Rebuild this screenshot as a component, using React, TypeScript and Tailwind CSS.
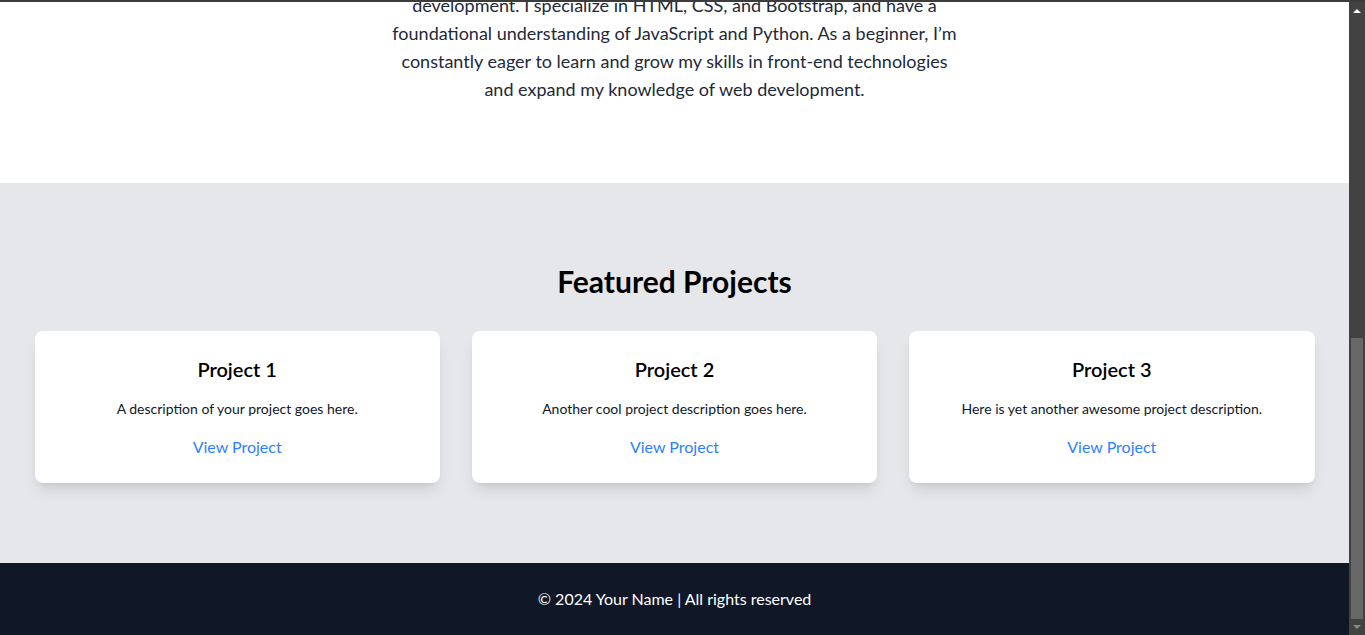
import React from 'react';

// Project cards shown in the featured section
interface Project {
  title: string;
  description: string;
}

const projects: Project[] = [
  { title: 'Project 1', description: 'A description of your project goes here.' },
  { title: 'Project 2', description: 'Another cool project description goes here.' },
  { title: 'Project 3', description: 'Here is yet another awesome project description.' },
];

// The about paragraph, already scrolled past its first lines
const aboutLines: string[] = [
  'development. I specialize in HTML, CSS, and Bootstrap, and have a',
  'foundational understanding of JavaScript and Python. As a beginner, I\u2019m',
  'constantly eager to learn and grow my skills in front-end technologies',
  'and expand my knowledge of web development.',
];

const Scrollbar: React.FC = () => (
  <div className="w-4 shrink-0 bg-[#424242] flex flex-col items-center">
    <svg width="16" height="16" viewBox="0 0 16 16" className="shrink-0">
      <path d="M4 11 L8 7 L12 11 Z" fill="#ffffff" />
    </svg>
    <div className="flex-1 w-full flex flex-col pt-[320px] pb-0 px-[2px]">
      <div className="flex-1 bg-[#686868]" />
    </div>
    <svg width="16" height="16" viewBox="0 0 16 16" className="shrink-0">
      <path d="M4 6 L12 6 L8 10 Z" fill="#8a8a8a" />
    </svg>
  </div>
);

const App: React.FC = () => {
  return (
    <div
      className="h-screen flex flex-col overflow-hidden border-t-2 border-[#3c3c3c]"
      style={{ fontFamily: 'Lato, "Noto Sans", sans-serif' }}
    >
      <div className="flex-1 flex min-h-0">
        <main className="flex-1 min-w-0 overflow-hidden flex flex-col">
          {/* About section */}
          <section className="bg-white pb-20">
            <p className="-mt-[11px] max-w-xl mx-auto text-center text-lg leading-7 text-gray-800">
              {aboutLines.map((line) => (
                <span key={line} className="block whitespace-nowrap">
                  {line}
                </span>
              ))}
            </p>
          </section>

          {/* Projects section */}
          <section className="bg-gray-200 py-20">
            <div className="max-w-7xl mx-auto">
              <h2 className="text-3xl font-bold text-center text-black mb-8">Featured Projects</h2>
              <div className="grid grid-cols-3 gap-8">
                {projects.map((project) => (
                  <div key={project.title} className="bg-white rounded-lg shadow-lg p-6 text-center">
                    <h3 className="text-xl font-semibold text-black mb-4">{project.title}</h3>
                    <p className="text-sm text-gray-900 mb-4">{project.description}</p>
                    <a href="#" className="text-blue-500">
                      View Project
                    </a>
                  </div>
                ))}
              </div>
            </div>
          </section>

          {/* Footer */}
          <footer className="bg-gray-900 text-white text-center py-6 flex-1">
            <p>&copy; 2024 Your Name | All rights reserved</p>
          </footer>
        </main>
        <Scrollbar />
      </div>
    </div>
  );
};

export default App;
